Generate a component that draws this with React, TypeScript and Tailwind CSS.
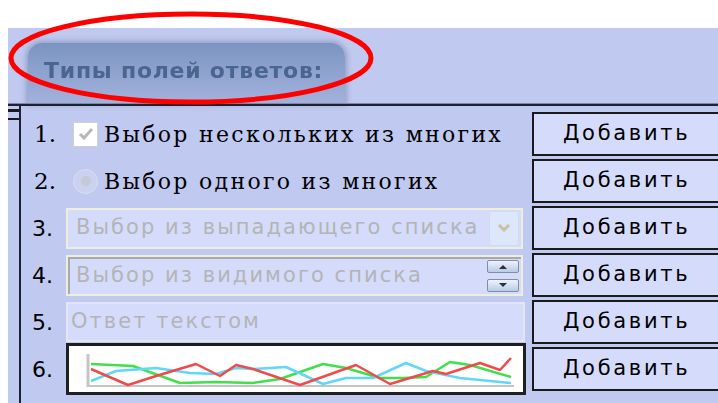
import { ReactNode } from 'react';

const serif = { fontFamily: '"DejaVu Serif", serif' };
const sans = { fontFamily: '"DejaVu Sans", sans-serif' };

// chart series, in the chart box's own coordinates
const series = [
  {
    color: '#3fe04a',
    points: '22,18 64,20 111,37 147,36 184,37 211,33 254,18 277,22 311,32 334,32 357,31 381,16 401,19 442,31',
  },
  {
    color: '#5fd8f5',
    points: '22,35 47,25 87,22 121,27 147,28 167,22 184,23 217,21 254,38 277,32 304,32 337,17 357,25 391,32 442,37',
  },
  {
    color: '#f04a4a',
    points: '22,23 59,39 87,30 127,18 151,30 167,19 184,23 231,39 287,19 321,38 364,25 377,28 411,17 431,24 442,12',
  },
];

function Row({ num, numFont, children }: { num: string; numFont: 'serif' | 'sans'; children: ReactNode }) {
  return (
    <div className="flex items-center h-[44px]">
      <span
        className={numFont === 'serif' ? 'w-[45px] pl-[13px] text-[23px] text-black' : 'w-[45px] pl-[11px] text-[22px] text-black'}
        style={numFont === 'serif' ? serif : sans}
      >
        {num}
      </span>
      <div className="w-[460px] h-full flex items-center">{children}</div>
      <button
        className="ml-[6px] w-[200px] h-full shrink-0 border-2 border-[#1a1a1a] bg-[#d5dcfb] text-[21px] tracking-[2.7px] text-black text-left pl-[29px]"
        style={sans}
      >
        Добавить
      </button>
    </div>
  );
}

export default function App() {
  return (
    <div className="w-[718px] h-[403px] bg-white flex flex-col overflow-hidden relative">
      <div className="h-[28px] shrink-0" />
      <div className="flex-1 ml-[8px] bg-[#c0c9ef] flex flex-col">
        {/* tab header */}
        <div className="h-[75px] shrink-0 pl-[20px] pt-[15px]">
          <div className="w-[317px] h-[60px] rounded-t-[14px] bg-gradient-to-b from-[#7b94c1] to-[#a3b2dd] shadow-[0_0_5px_2px_rgba(90,110,150,0.45)] pl-[16px] pt-[11px]">
            <span
              className="text-[22px] font-bold tracking-[0.75px] text-[#4a6592] blur-[0.4px]"
              style={sans}
            >
              Типы полей ответов:
            </span>
          </div>
        </div>
        <div className="h-[1px] bg-[#7d88a8]" />
        <div className="h-[2px] bg-[#1d2230]" />
        <div className="flex flex-1">
          {/* left gutter marks */}
          <div className="w-[11px] shrink-0 flex flex-col pt-[3px]">
            <div className="h-[3px] bg-[#1a1a1a]" />
            <div className="h-[6px]" />
            <div className="h-[2px] bg-[#1a1a1a]" />
          </div>
          <div className="w-[2px] bg-[#1d2230] shrink-0" />
          <div className="flex flex-col gap-[3px] pt-[6px]">
            <Row num="1." numFont="serif">
              <span className="w-[25px] h-[25px] ml-[7px] bg-white border border-[#d0d0d0] flex items-center justify-center">
                <svg width="16" height="14" viewBox="0 0 16 14">
                  <path d="M2 7 L6 11 L14 2" fill="none" stroke="#b8b8b8" strokeWidth="3" />
                </svg>
              </span>
              <span className="ml-[6px] text-[22px] tracking-[2.3px] text-black" style={serif}>
                Выбор нескольких из многих
              </span>
            </Row>
            <Row num="2." numFont="serif">
              <span className="w-[25px] h-[25px] ml-[7px] rounded-full bg-[#cbd2f0] border border-[#d9ddf3] flex items-center justify-center">
                <span className="w-[10px] h-[10px] rounded-full bg-[#c6c9d6]" />
              </span>
              <span className="ml-[6px] text-[22px] tracking-[2.3px] text-black" style={serif}>
                Выбор одного из многих
              </span>
            </Row>
            <Row num="3." numFont="sans">
              <div className="w-[457px] h-[41px] border-2 border-[#efeedd] bg-[#d5dcfb] flex items-center pl-[8px] pr-[2px]">
                <span className="flex-1 text-[21px] tracking-[2.05px] text-[#b4b4b4] whitespace-nowrap" style={sans}>
                  Выбор из выпадающего списка
                </span>
                <span className="w-[30px] h-[35px] rounded-[3px] bg-[#dce7fb] border border-[#cfdbf3] flex items-center justify-center">
                  <svg width="14" height="10" viewBox="0 0 14 10">
                    <path d="M2 2 L7 7 L12 2" fill="none" stroke="#c9c0a0" strokeWidth="3" />
                  </svg>
                </span>
              </div>
            </Row>
            <Row num="4." numFont="sans">
              <div className="w-[457px] h-[41px] border-2 border-[#efeedd] bg-[#d5dcfb] flex items-center">
                <div className="flex-1 h-full border-l-2 border-t-2 border-[#a9a9a9] flex items-center pl-[6px] pr-[2px]">
                  <span className="flex-1 text-[21px] tracking-[2.05px] text-[#b4b4b4] whitespace-nowrap" style={sans}>
                    Выбор из видимого списка
                  </span>
                  <span className="w-[32px] flex flex-col gap-[6px]">
                    <span className="h-[13px] rounded-[2px] border border-[#7d8fa8] bg-gradient-to-b from-[#eef3fb] to-[#b9cbe6] flex items-center justify-center">
                      <svg width="8" height="5" viewBox="0 0 8 5">
                        <path d="M0 5 L4 1 L8 5 Z" fill="#2a3040" />
                      </svg>
                    </span>
                    <span className="h-[13px] rounded-[2px] border border-[#7d8fa8] bg-gradient-to-b from-[#eef3fb] to-[#b9cbe6] flex items-center justify-center">
                      <svg width="8" height="5" viewBox="0 0 8 5">
                        <path d="M0 0 L4 4 L8 0 Z" fill="#2a3040" />
                      </svg>
                    </span>
                  </span>
                </div>
              </div>
            </Row>
            <Row num="5." numFont="sans">
              <div className="w-[459px] h-[40px] border-2 border-[#e3e5f2] bg-[#d5dcfb] flex items-center pl-[3px]">
                <span className="text-[21px] tracking-[2.05px] text-[#b4b4b4]" style={sans}>
                  Ответ текстом
                </span>
              </div>
            </Row>
            <Row num="6." numFont="sans">
              <div className="w-[460px] h-[52px] border-[3px] border-[#1f1f1f] bg-white">
                <svg width="454" height="46" viewBox="0 0 454 46">
                  <line x1="19" y1="8" x2="19" y2="41" stroke="#c4c4c4" strokeWidth="3" />
                  <line x1="19" y1="40" x2="445" y2="40" stroke="#c4c4c4" strokeWidth="2" />
                  {series.map((s) => (
                    <polyline
                      key={s.color}
                      points={s.points}
                      fill="none"
                      stroke={s.color}
                      strokeWidth="2.5"
                      strokeLinejoin="round"
                    />
                  ))}
                </svg>
              </div>
            </Row>
          </div>
        </div>
      </div>
      {/* red annotation ring */}
      <svg className="absolute left-0 top-0 pointer-events-none" width="718" height="403">
        <ellipse cx="191" cy="58" rx="180" ry="44" fill="none" stroke="#ff0000" strokeWidth="5" />
      </svg>
    </div>
  );
}
